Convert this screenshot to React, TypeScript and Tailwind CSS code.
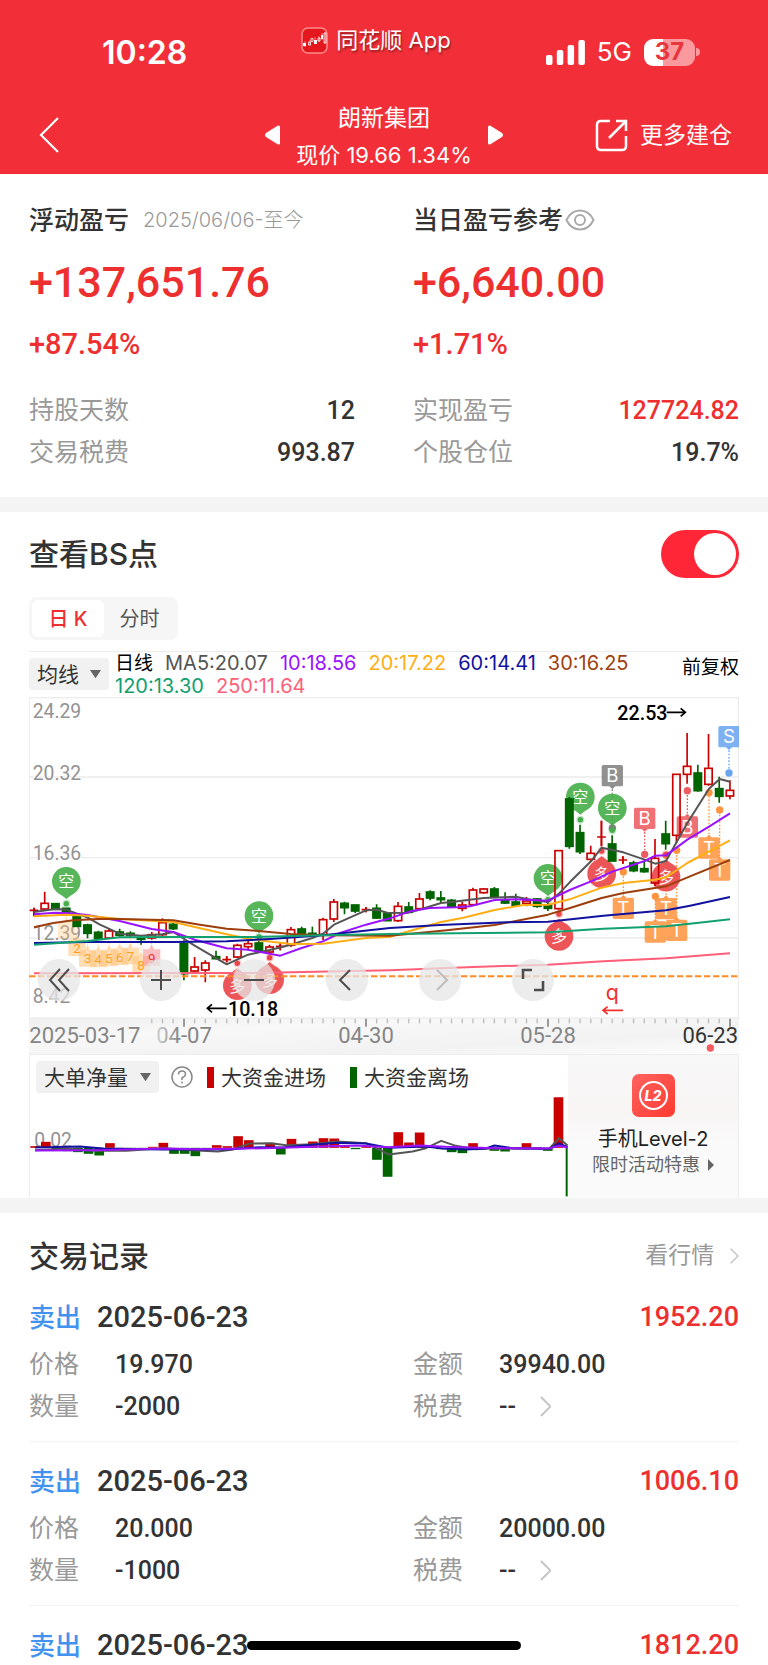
import type { ReactNode } from 'react';

const SANS = "font-['Inter','Noto_Sans_CJK_SC',sans-serif]";
const NUM = "font-['Roboto','Noto_Sans_CJK_SC',sans-serif]";

/* ---------- K-line data, in chart units: [high, bodyTop, bodyBottom, low, kind] ---------- */
type Candle = [number, number, number, number, 'r' | 'g' | 'x'];
const candles: Candle[] = [
  [654, 661, 664, 680, 'x'], [606, 641, 658, 660, 'r'], [642, 642, 659, 660, 'g'], [656, 656, 672, 672, 'g'],
  [678, 680, 710, 710, 'g'], [702, 706, 731, 746, 'g'], [723, 728, 747, 750, 'g'], [715, 724, 745, 746, 'r'],
  [717, 727, 737, 741, 'g'], [725, 731, 737, 744, 'g'], [742, 745, 749, 765, 'g'], [727, 735, 745, 750, 'r'],
  [686, 699, 735, 740, 'r'], [700, 704, 717, 721, 'g'], [752, 762, 852, 872, 'g'], [802, 832, 844, 850, 'r'],
  [812, 820, 841, 878, 'r'], [783, 801, 807, 809, 'g'], [800, 809, 813, 818, 'x'], [762, 767, 802, 806, 'r'],
  [748, 762, 771, 782, 'r'], [750, 760, 784, 790, 'g'], [765, 772, 787, 790, 'r'], [757, 769, 772, 782, 'x'],
  [712, 720, 766, 772, 'r'], [711, 718, 734, 736, 'g'], [711, 731, 738, 738, 'g'], [684, 690, 735, 752, 'r'],
  [628, 637, 688, 697, 'r'], [636, 641, 654, 674, 'g'], [646, 646, 664, 670, 'g'], [652, 659, 662, 668, 'x'],
  [644, 656, 685, 687, 'g'], [668, 671, 693, 694, 'g'], [637, 650, 693, 697, 'r'], [637, 652, 668, 670, 'g'],
  [610, 628, 657, 662, 'r'], [602, 607, 625, 632, 'g'], [604, 625, 630, 640, 'g'], [628, 632, 652, 653, 'g'],
  [636, 646, 656, 665, 'r'], [594, 601, 645, 647, 'r'], [595, 598, 609, 612, 'r'], [592, 598, 622, 623, 'g'],
  [608, 630, 640, 643, 'g'], [612, 637, 647, 648, 'g'], [622, 634, 641, 650, 'r'], [626, 628, 650, 654, 'g'],
  [630, 646, 656, 664, 'g'], [483, 483, 657, 660, 'r'], [322, 328, 470, 477, 'g'], [405, 429, 486, 493, 'g'],
  [468, 491, 509, 516, 'r'], [393, 441, 444, 470, 'x'], [437, 463, 514, 515, 'g'], [500, 510, 513, 522, 'x'],
  [513, 520, 543, 548, 'g'], [514, 537, 546, 549, 'g'], [448, 506, 580, 590, 'r'], [393, 433, 462, 480, 'g'],
  [254, 254, 437, 460, 'r'], [130, 230, 254, 282, 'r'], [225, 250, 303, 306, 'g'], [133, 236, 284, 288, 'r'],
  [261, 297, 320, 339, 'g'], [272, 302, 319, 329, 'r'],
];
const STEP = 32.12;
const cx = (i: number) => 42 + STEP * i;

const averages: { color: string; points: string }[] = [
  { color: '#ff5f78', points: '42,851 700,850 1110,842 1360,832 1584,825 1750,815 1938,806 2130,791' },
  { color: '#555555', points: '42,667 106,658 139,660 203,684 240,705 299,732 363,738 427,734 460,727 524,768 620,824 684,795 749,781 813,765 877,745 909,732 942,705 1038,662 1070,660 1102,669 1160,670 1198,660 1263,640 1295,637 1392,625 1488,621 1520,628 1584,637 1617,612 1649,578 1713,515 1745,474 1810,488 1874,510 1906,522 1938,514 2002,400 2067,297 2099,268 2130,276' },
  { color: '#9a12ff', points: '42,674 106,669 139,670 203,676 299,694 395,718 460,727 524,750 620,776 684,780 781,798 845,775 909,755 960,730 1038,705 1110,686 1170,665 1230,655 1310,653 1350,650 1424,631 1488,629 1584,633 1649,601 1713,575 1777,546 1874,514 1906,498 1938,497 2002,450 2067,411 2130,371' },
  { color: '#ffae14', points: '42,680 139,675 203,678 299,688 460,697 524,712 620,734 700,750 813,763 909,762 1038,745 1110,741 1260,698 1330,684 1424,661 1510,646 1584,645 1649,629 1745,594 1810,580 1906,570 1938,563 2002,520 2130,452' },
  { color: '#9c3d0c', points: '42,713 100,700 160,692 250,687 299,688 460,692 540,705 620,717 716,724 813,733 909,737 1110,738 1280,722 1424,706 1584,675 1650,655 1745,625 1810,610 1938,590 2010,560 2130,511' },
  { color: '#1212a0', points: '42,760 203,757 460,757 620,755 750,748 909,737 1110,715 1260,706 1460,698 1584,696 1750,678 1938,662 2010,648 2130,622' },
  { color: '#12a06e', points: '42,765 203,754 300,743 460,742 700,742 909,737 1110,733 1310,731 1584,728 1750,717 1938,710 2030,700 2130,689' },
];

const pins: { x: number; y: number; dot: number; up: boolean }[] = [
  { x: 139, y: 575, dot: 642, up: true }, { x: 717, y: 678, dot: 742, up: true },
  { x: 1584, y: 566, dot: 630, up: true }, { x: 1681, y: 322, dot: 390, up: true },
  { x: 1777, y: 355, dot: 422, up: true },
  { x: 652, y: 888, dot: 821, up: false }, { x: 749, y: 870, dot: 804, up: false },
  { x: 1617, y: 740, dot: 673, up: false }, { x: 1745, y: 552, dot: 484, up: false },
  { x: 1938, y: 562, dot: 494, up: false },
];

const tags: { t: string; x: number; y: number; dot: number; color: string }[] = [
  { t: 'B', x: 1777, y: 258, dot: 415, color: '#808080' }, { t: 'B', x: 1874, y: 386, dot: 494, color: '#ee5a5f' },
  { t: 'B', x: 2002, y: 412, dot: 303, color: '#ee5a5f' }, { t: 'S', x: 2127, y: 141, dot: 250, color: '#68a5f0' },
  { t: 'T', x: 1810, y: 656, dot: 547, color: '#ff9440' }, { t: 'T', x: 2067, y: 475, dot: 309, color: '#ff9440' },
  { t: 'T', x: 2099, y: 541, dot: 361, color: '#ff9440' }, { t: 'T', x: 1938, y: 657, dot: 497, color: '#ff9440' },
  { t: 'T', x: 1906, y: 727, dot: 620, color: '#ff9440' }, { t: 'T', x: 1970, y: 722, dot: 482, color: '#ff9440' },
];

const flags: [string, number, number][] = [
  ['', 139, 722], ['2', 171, 774], ['3', 203, 806], ['4', 235, 808], ['5', 267, 805],
  ['6', 299, 801], ['7', 331, 799], ['8', 363, 825], ['9', 395, 804],
];

function KLineChart() {
  return (
    <svg viewBox="27 22 2130 1071" className="block w-full" role="img" aria-label="日线">
      <defs>
        <linearGradient id="axis" x1="0" x2="1" y1="0" y2="1">
          <stop offset="0" stopColor="#efefef" />
          <stop offset="0.3" stopColor="#f8f8f8" />
          <stop offset="0.7" stopColor="#f2f2f2" />
          <stop offset="1" stopColor="#fdfdfd" />
        </linearGradient>
        <linearGradient id="fade" gradientUnits="userSpaceOnUse" x1="400" x2="480" y1="0" y2="0">
          <stop offset="0" stopColor="#d8d8d8" />
          <stop offset="1" stopColor="#858585" />
        </linearGradient>
      </defs>
      <rect x="27" y="985" width="2130" height="108" fill="url(#axis)" />
      <g stroke="#ececec" strokeWidth="4" fill="none">
        <rect x="28" y="24" width="2127" height="961" />
        <path d="M27 262H2157M27 504H2157M27 745H2157" />
      </g>

      <g fontFamily="Roboto" fontSize="58" fill="#929292" stroke="#fff" strokeWidth="5" paintOrder="stroke">
        <text x="38" y="84">24.29</text>
        <text x="38" y="271">20.32</text>
        <text x="38" y="511">16.36</text>
        <text x="38" y="752">12.39</text>
        <text x="38" y="941">8.42</text>
      </g>

      {flags.map(([t, x, y]) => {
        const red = t === '9';
        return (
          <g key={x}>
            <path d={`M${x} ${y - 60}V${y - 26}`} stroke="#ffb65c" strokeWidth="2" strokeDasharray="4 4" />
            <path
              d={`M${x - 26} ${y - 25}h18l8 -14 8 14h18v50h-52z`}
              fill={red ? '#f58a92' : '#ffc27a'}
              fillOpacity={t === '' ? 0.35 : 0.55}
            />
            <text x={x} y={y + 15} fontFamily="Roboto" fontSize="40" textAnchor="middle" fill={red ? '#e5383b' : '#ff9d1e'}>
              {t}
            </text>
          </g>
        );
      })}

      {tags.map((m) => {
        const below = m.y > m.dot;
        const edge = below ? m.y - 31 : m.y + 31;
        const dir = below ? -9 : 9;
        return (
          <g key={`${m.t}${m.x}`}>
            <path d={`M${m.x} ${edge}V${m.dot}`} stroke={m.color} strokeWidth="4" strokeDasharray="5 5" />
            <circle cx={m.x} cy={m.dot} r="11" fill={m.color} />
            <g opacity="0.86">
              <rect x={m.x - 32} y={m.y - 32} width="64" height="64" rx="5" fill={m.color} />
              <path d={`M${m.x - 10} ${edge}h20l-10 ${dir}z`} fill={m.color} />
            </g>
            <text x={m.x} y={m.y + 20} fontFamily="Inter" fontSize="56" textAnchor="middle" fill="#fff">
              {m.t}
            </text>
          </g>
        );
      })}

      {pins.map((p) => {
        const s = p.up ? 1 : -1;
        const color = p.up ? '#45ad49' : '#ec4448';
        return (
          <g key={`${p.x}-${p.y}`}>
            <g opacity="0.9">
              <circle cx={p.x} cy={p.y} r="43" fill={color} />
              <path d={`M${p.x - 24} ${p.y + s * 34}L${p.x} ${p.y + s * 53}L${p.x + 24} ${p.y + s * 34}z`} fill={color} />
            </g>
            <circle cx={p.x} cy={p.dot} r="12" fill={color} fillOpacity="0.3" />
            <circle cx={p.x} cy={p.dot} r="8" fill={color} />
            <text x={p.x} y={p.y + 18} fontFamily="Noto Sans CJK SC" fontSize="48" textAnchor="middle" fill="#fff">
              {p.up ? '空' : '多'}
            </text>
          </g>
        );
      })}

      {candles.map(([hi, top, bot, lo, kind], i) => {
        const x = cx(i);
        const c = kind === 'g' ? '#006400' : '#c80000';
        return (
          <g key={i} stroke={c} strokeWidth="5" fill={kind === 'g' ? c : 'none'}>
            <path d={`M${x} ${hi}V${top}M${x} ${bot}V${lo}`} />
            {kind === 'x' ? (
              <path d={`M${x - 13} ${top + 1}h26M${x} ${hi}V${lo}`} />
            ) : (
              <rect x={x - 11} y={top} width="22" height={bot - top} />
            )}
          </g>
        );
      })}

      {averages.map((a) => (
        <polyline key={a.color} points={a.points} fill="none" stroke={a.color} strokeWidth="6" strokeLinejoin="round" />
      ))}
      <path d="M27 860H2157" stroke="#ff8a26" strokeWidth="6" strokeDasharray="19 8" />

      <g fontFamily="Roboto" fontSize="59" fontWeight="500" fill="#000">
        <text x="624" y="978">10.18</text>
        <text x="1792" y="90">22.53</text>
      </g>
      <g fill="none" stroke="#000" strokeWidth="5">
        <path d="M620 956H562M576 944L562 956L576 968" />
        <path d="M1940 68H1996M1982 56L1996 68L1982 80" />
      </g>
      <text x="1777" y="930" fontFamily="Inter" fontSize="64" textAnchor="middle" fill="#f0322f">q</text>
      <path d="M1809 962H1749M1763 951L1749 962L1763 973" fill="none" stroke="#f0322f" strokeWidth="5" />

      <g stroke="#bbb" strokeWidth="4">
        {candles.map((_, i) => (i >= 11 && i % 17 !== 14 ? <path key={i} d={`M${cx(i)} 987v14`} /> : null))}
      </g>
      <path d="M492 987v24M1038 987v24M1584 987v24M2130 987v24" stroke="#888" strokeWidth="5" />
      <g fontFamily="Roboto" fontSize="66" fill="#858585">
        <text x="28" y="1060">2025-03-17</text>
        <text x="492" y="1060" textAnchor="middle" fill="url(#fade)">04-07</text>
        <text x="1038" y="1060" textAnchor="middle">04-30</text>
        <text x="1584" y="1060" textAnchor="middle">05-28</text>
        <text x="2154" y="1060" textAnchor="end" fill="#333">06-23</text>
      </g>
      <circle cx="2071" cy="1075" r="11" fill="#f55a5e" />
    </svg>
  );
}

/* ---------- Net large-order volume ---------- */
const flows = [
  5, 18, -8, -10, -13, -18, -23, 14, -3, -3, -3, 3, 15, -18, -18, -25, -3, 8, 5, 35, 23, 2, 15, -20, 27, 4, 19, 29, 28,
  6, -4, 4, -36, -87, 47, 16, 46, 3, -4, -13, -16, 14, 2, -9, -11, 2, 14, 2, -9, 152,
];

function FlowChart() {
  return (
    <svg viewBox="0 0 1617 429" className="block w-full" role="img" aria-label="大单净量">
      <text x="13" y="277" fontFamily="Roboto" fontSize="58" fill="#929292">0.02</text>
      {flows.map((v, i) => (
        <rect
          key={i}
          x={1 + i * 32.1}
          y={v > 0 ? 279 - v : 279}
          width="29"
          height={Math.abs(v)}
          fill={v > 0 ? '#c80000' : '#006400'}
        />
      ))}
      <rect x="1610" y="279" width="6" height="146" fill="#006400" />
      <g fill="none" strokeWidth="6" strokeLinejoin="round">
        <polyline stroke="#555" points="15,286 110,282 200,288 290,288 400,280 500,287 565,290 610,284 660,266 725,265 770,271 850,268 925,260 1010,265 1078,299 1150,290 1190,280 1236,258 1280,273 1340,283 1400,280 1500,282 1560,282 1590,250 1616,272" />
        <polyline stroke="#1212a0" points="15,278 150,275 220,281 400,284 500,284 600,283 690,277 760,278 850,270 925,264 1010,266 1078,279 1190,275 1240,281 1310,284 1370,281 1396,272 1450,280 1560,282 1590,266 1616,277" />
        <polyline stroke="#9a12ff" points="15,287 200,286 400,281 500,283 610,282 760,279 870,275 980,272 1078,277 1170,272 1250,276 1400,280 1560,281 1590,273 1616,278" />
      </g>
    </svg>
  );
}

/* ---------- Small pieces ---------- */
function Chevron({ className }: { className: string }) {
  return (
    <svg viewBox="0 0 12 22" className={className} fill="none" stroke="currentColor" strokeWidth="2">
      <path d="M1 1l10 10L1 21" />
    </svg>
  );
}

function RoundButton({ label, muted, children }: { label: string; muted?: boolean; children: ReactNode }) {
  return (
    <button
      type="button"
      aria-label={label}
      className={`flex size-[42px] items-center justify-center rounded-full bg-[#e6e6e6]/75 ${muted ? 'text-[#bdbdbd]' : 'text-[#4d4d4d]'}`}
    >
      <svg viewBox="0 0 24 24" className="size-6" fill="none" stroke="currentColor" strokeWidth="2">
        {children}
      </svg>
    </button>
  );
}

function Picker({ label, className }: { label: string; className: string }) {
  return (
    <span className={`relative flex h-8 shrink-0 items-center rounded bg-[#f1f1f1] ${className}`}>
      <select aria-label={label} className="h-full w-full appearance-none bg-transparent pl-2 text-[#333] outline-none">
        <option>{label}</option>
      </select>
      <svg viewBox="0 0 12 10" className="pointer-events-none absolute right-2 w-[11px] fill-[#666]">
        <path d="M0 1h12L6 10z" />
      </svg>
    </span>
  );
}

function Stat({ label, value, red }: { label: string; value: string; red?: boolean }) {
  return (
    <div className="flex h-[42px] items-center justify-between">
      <dt className="text-[25px] text-[#999]">{label}</dt>
      <dd className={`${NUM} text-[25px] font-medium ${red ? 'text-[#ee2f30]' : 'text-[#333]'}`}>{value}</dd>
    </div>
  );
}

function Field({ label, value, more }: { label: string; value: string; more?: boolean }) {
  return (
    <div className="flex h-[42px] items-center">
      <dt className="w-[86px] text-[25px] text-[#999]">{label}</dt>
      <dd className={`${NUM} flex items-center text-[25px] font-medium text-[#333]`}>
        {more ? <span className="w-[28px]">{value}</span> : value}
        {more && <Chevron className="ml-[13px] h-[21px] text-[#c4c4c4]" />}
      </dd>
    </div>
  );
}

function TradeHead({ amount }: { amount: string }) {
  return (
    <div className="mt-5 flex h-10 items-center">
      <span className="text-[26px] font-medium text-[#4492ef]">卖出</span>
      <span className={`${NUM} ml-4 text-[29px] font-medium text-[#333]`}>2025-06-23</span>
      <span className={`${NUM} ml-auto text-[27px] font-medium text-[#ee2f30]`}>{amount}</span>
    </div>
  );
}

const trades = [
  { amount: '1952.20', price: '19.970', total: '39940.00', count: '-2000' },
  { amount: '1006.10', price: '20.000', total: '20000.00', count: '-1000' },
];

const legend = [
  ['MA5:20.07', 'text-[#555]'], ['10:18.56', 'text-[#9a12ff]'], ['20:17.22', 'text-[#ffae14]'],
  ['60:14.41', 'text-[#1212a0]'], ['30:16.25', 'text-[#a0420f]'], ['120:13.30', 'text-[#12a06e]'],
  ['250:11.64', 'text-[#ff5f78]'],
];

export default function App() {
  return (
    <div className={`${SANS} w-full bg-white leading-none text-[#333]`}>
      <header className="bg-[#f22f38] text-white">
        <div className="grid h-[88px] grid-cols-[1fr_auto_1fr]">
          <div className="pt-[37px] pl-[102px] text-[32px] leading-[32px] font-semibold">10:28</div>
          <div className="flex h-10 items-center gap-2 self-start pt-10 pr-4">
            <svg viewBox="0 0 27 27" className="size-[27px] shrink-0" fill="none">
              <rect x="1" y="1" width="25" height="25" rx="6" fill="#e3171d" stroke="#ff8c8c" strokeWidth="1.5" />
              <path d="M4 14v6M9 13v6M14 10v7M18 9v6M21 6v7M24 5v12" stroke="#fff" strokeOpacity=".6" strokeWidth=".8" />
              <path d="M2 16h3v3H2zM13 13h3v4h-3zM20 8h2v4h-2z" fill="#fff" />
              <path d="M7.500 15h2v3h-2zM10 11.500h2v3h-2zM17 11h2v3h-2zM23 6h2v10h-2z" stroke="#fff" strokeWidth=".8" />
            </svg>
            <span className="text-[22px] whitespace-nowrap text-shadow-[1px_2px_2px_rgb(0_0_0/0.4)]">同花顺 App</span>
          </div>
          <div className="flex h-[104px] items-center justify-end pr-[68px]">
            <svg viewBox="0 0 39 25" className="h-[25px] w-[39px] fill-white">
              <rect x="0" y="15" width="6.500" height="10" rx="2" />
              <rect x="10.800" y="10" width="6.500" height="15" rx="2" />
              <rect x="21.600" y="5" width="6.500" height="20" rx="2" />
              <rect x="32.400" y="0" width="6.500" height="25" rx="2" />
            </svg>
            <span className="ml-3 text-[26px]">5G</span>
            <span className="relative ml-3 flex h-[27px] w-[51px] items-center justify-center overflow-hidden rounded-[9px] bg-linear-to-r from-white from-37% to-[#fa9a9e] to-37% text-[24px] font-bold text-[#e8363e]">
              37
            </span>
            <span className="ml-px h-2 w-1 rounded-r-full bg-[#fa9a9e]" />
          </div>
        </div>
        <div className="grid h-[86px] grid-cols-[1fr_auto_1fr] items-center pt-2">
          <button type="button" aria-label="返回" className="ml-[39px] w-5">
            <svg viewBox="0 0 20 36" className="h-9 w-5" fill="none" stroke="currentColor" strokeWidth="2.200">
              <path d="M19 1L2 18l17 17" />
            </svg>
          </button>
          <div className="flex items-center gap-4">
            <button type="button" aria-label="上一只">
              <svg viewBox="0 0 15 20" className="h-5 w-[15px] fill-white"><path d="M13 .5Q15 0 15 2v16q0 2-2 1.500L1 12q-2-2 0-4z" /></svg>
            </button>
            <div className="pt-1 text-center">
              <h1 className="text-[23px] leading-[36px]">朗新集团</h1>
              <p className="text-[22px] leading-[38px]">现价 19.66 1.34%</p>
            </div>
            <button type="button" aria-label="下一只">
              <svg viewBox="0 0 15 20" className="h-5 w-[15px] fill-white"><path d="M2 .5Q0 0 0 2v16q0 2 2 1.500L14 12q2-2 0-4z" /></svg>
            </button>
          </div>
          <button type="button" className="mr-[36px] flex items-center gap-3 justify-self-end text-[23px] whitespace-nowrap">
            <svg viewBox="0 0 33 33" className="size-[33px]" fill="none" stroke="currentColor" strokeWidth="2.500">
              <path d="M15 2H6Q2 2 2 6v21q0 4 4 4h21q4 0 4-4V17M21 2h10v10M31 2L14 19" />
            </svg>
            更多建仓
          </button>
        </div>
      </header>

      <section className="grid grid-cols-2 gap-x-[58px] px-[29px] pt-7 pb-6">
        <div>
          <div className="flex h-9 items-center gap-[14px] whitespace-nowrap">
            <h2 className="text-[25px] font-medium">浮动盈亏</h2>
            <span className="text-[20px] font-light text-[#999]">2025/06/06-至今</span>
          </div>
          <p className={`${NUM} mt-4 text-[43px] leading-[56px] font-medium text-[#ee2f30]`}>+137,651.76</p>
          <p className={`${NUM} mt-4 text-[29px] leading-[36px] font-medium text-[#ee2f30]`}>+87.54%</p>
          <dl className="mt-[27px]">
            <Stat label="持股天数" value="12" />
            <Stat label="交易税费" value="993.87" />
          </dl>
        </div>
        <div>
          <div className="flex h-9 items-center gap-[2px] whitespace-nowrap">
            <h2 className="text-[25px] font-medium">当日盈亏参考</h2>
            <svg viewBox="0 0 30 22" className="h-[22px] w-[30px]" fill="none" stroke="#aaa" strokeWidth="2">
              <path d="M1.500 11Q6 1.500 15 1.500T28.500 11Q24 20.500 15 20.500T1.500 11z" />
              <circle cx="15" cy="11" r="5" />
            </svg>
          </div>
          <p className={`${NUM} mt-4 text-[43px] leading-[56px] font-medium text-[#ee2f30]`}>+6,640.00</p>
          <p className={`${NUM} mt-4 text-[29px] leading-[36px] font-medium text-[#ee2f30]`}>+1.71%</p>
          <dl className="mt-[27px]">
            <Stat label="实现盈亏" value="127724.82" red />
            <Stat label="个股仓位" value="19.7%" />
          </dl>
        </div>
      </section>

      <div className="h-[15px] bg-[#f4f4f4]" />

      <section className="px-[29px] pt-[17px]">
        <div className="flex h-[50px] items-center justify-between">
          <h2 className="text-[30px] font-medium">查看BS点</h2>
          <label className="flex h-[48px] w-[78px] cursor-pointer items-center justify-end rounded-full bg-[#ff2638] p-[3px]">
            <input type="checkbox" defaultChecked aria-label="查看BS点" className="sr-only" />
            <span className="size-[42px] rounded-full bg-white" />
          </label>
        </div>
        <div className="mt-[18px] flex h-[43px] w-fit rounded-lg bg-[#f6f6f6] p-[3px] text-[20px]">
          <button type="button" className="w-[72px] rounded-md bg-white font-medium text-[#ee2f30]">日 K</button>
          <button type="button" className="w-[71px] text-[#555]">分时</button>
        </div>
        <div className="mt-[11px] flex h-[46px] border-t border-[#ececec]">
          <div className="mt-[6px] text-[21px]"><Picker label="均线" className="w-[80px]" /></div>
          <div className="ml-[6px] flex flex-1 flex-wrap content-start gap-x-3 text-[20px] leading-[23px]">
            <span className="text-[19px] text-black">日线</span>
            {legend.map(([text, color]) => (
              <span key={text} className={color}>{text}</span>
            ))}
          </div>
          <span className="mt-[6px] ml-3 text-[19px] whitespace-nowrap text-black">前复权</span>
        </div>

        <div className="relative">
          <KLineChart />
          <div className="absolute top-[262px] left-[9px] flex gap-[51px]">
            <div className="mr-[9px]">
              <RoundButton label="最早"><path d="M13 1L3 12l10 11M22 1L12 12l10 11" /></RoundButton>
            </div>
            <RoundButton label="放大"><path d="M2 12h20M12 2v20" /></RoundButton>
            <RoundButton label="缩小"><path d="M2 12h20" /></RoundButton>
            <RoundButton label="向前"><path d="M15 2L5 12l10 10" /></RoundButton>
            <RoundButton label="向后" muted><path d="M9 2l10 10L9 22" /></RoundButton>
            <RoundButton label="全屏"><path d="M2 11V2h9M22 13v9h-9" strokeWidth="2.600" /></RoundButton>
          </div>
        </div>

        <div className="flex border-x border-t border-[#ececec]">
          <div className="relative min-w-0 flex-1">
            <FlowChart />
            <div className="absolute top-[6px] left-[6px] flex items-center text-[21px] whitespace-nowrap">
              <Picker label="大单净量" className="w-[123px]" />
              <svg viewBox="0 0 22 22" className="ml-3 size-[22px]" fill="none" stroke="#888" strokeWidth="1.500">
                <circle cx="11" cy="11" r="10" />
                <path d="M7.500 8.500Q7.500 5 11 5t3.500 3.200Q14.500 10 11 12v2M11 15.500v2" />
              </svg>
              <span className="ml-[14px] h-[21px] w-[7px] bg-[#c80000]" />
              <span className="ml-[7px]">大资金进场</span>
              <span className="ml-6 h-[21px] w-[7px] bg-[#006400]" />
              <span className="ml-[7px]">大资金离场</span>
            </div>
          </div>
          <a href="#level2" className="flex w-[170px] flex-col items-center bg-linear-to-b from-[#f8f8f8] via-[#f8f4f4] via-40% to-[#fafafa] to-60% pt-[19px] whitespace-nowrap">
            <svg viewBox="0 0 43 43" className="size-[43px]">
              <defs>
                <linearGradient id="l2" x1="0" y1="0" x2="1" y2="1">
                  <stop offset="0" stopColor="#ff6360" />
                  <stop offset="1" stopColor="#ff3a30" />
                </linearGradient>
              </defs>
              <rect width="43" height="43" rx="7" fill="url(#l2)" />
              <circle cx="21.500" cy="21.500" r="13.500" fill="none" stroke="#fff" strokeWidth="2" />
              <text x="21" y="27" fontFamily="Inter" fontSize="14" fontWeight="800" fontStyle="italic" textAnchor="middle" fill="#fff">L2</text>
            </svg>
            <span className="mt-[9px] text-[20px] leading-[26px] text-[#222]">手机Level-2</span>
            <span className="flex items-center gap-2 text-[18px] leading-[26px] text-[#666]">
              限时活动特惠
              <svg viewBox="0 0 6 12" className="h-3 w-[6px] fill-[#666]"><path d="M0 0l6 6-6 6z" /></svg>
            </span>
          </a>
        </div>
      </section>

      <div className="h-[15px] bg-[#f4f4f4]" />

      <section className="px-[29px] pt-[21px]">
        <div className="flex h-11 items-center justify-between">
          <h2 className="text-[30px] font-medium">交易记录</h2>
          <a href="#quotes" className="flex items-center gap-4 text-[23px] text-[#999]">
            看行情
            <Chevron className="h-4 text-[#c4c4c4]" />
          </a>
        </div>
        {trades.map((t) => (
          <article key={t.amount} className="border-b border-[#f4f4f4] pb-[13px]">
            <TradeHead amount={t.amount} />
            <dl className="mt-[6px] grid grid-cols-2 gap-x-[58px]">
              <Field label="价格" value={t.price} />
              <Field label="金额" value={t.total} />
              <Field label="数量" value={t.count} />
              <Field label="税费" value="--" more />
            </dl>
          </article>
        ))}
        <article>
          <TradeHead amount="1812.20" />
        </article>
      </section>
      <div className="pointer-events-none fixed inset-x-0 bottom-[15px] flex justify-center">
        <span className="h-[9px] w-[274px] rounded-full bg-black" />
      </div>
    </div>
  );
}
